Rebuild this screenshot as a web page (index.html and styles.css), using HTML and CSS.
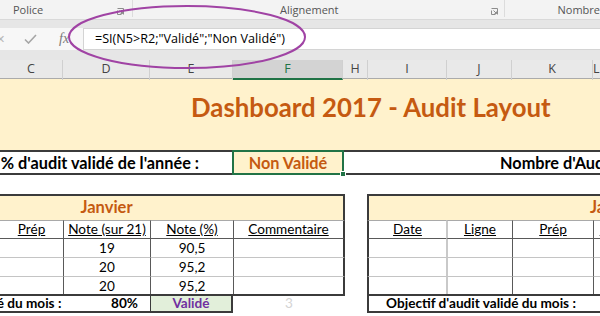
FILE: index.html
```html
<!DOCTYPE html>
<html lang="fr">
<head>
    <meta charset="UTF-8">
    <title>Dashboard 2017 - Audit Layout</title>
    <link rel="stylesheet" href="styles.css">
</head>
<body>
    <div class="ribbon">
        <div class="rgroup g-police">
            <span>Police</span>
            <svg class="launch" width="7" height="7" viewBox="0 0 7 7"><path d="M0.5 2.5V6.5H4.5M0.5 0.5H6.5V6.5M2.5 2.5L5.5 5.5M3.5 5.5H5.5V3.5" fill="none" stroke="#8c8c8c" stroke-width="1"/></svg>
        </div>
        <div class="rgroup g-align">
            <span>Alignement</span>
            <svg class="launch" width="7" height="7" viewBox="0 0 7 7"><path d="M0.5 2.5V6.5H4.5M0.5 0.5H6.5V6.5M2.5 2.5L5.5 5.5M3.5 5.5H5.5V3.5" fill="none" stroke="#8c8c8c" stroke-width="1"/></svg>
        </div>
        <div class="rgroup g-nombre">
            <span>Nombre</span>
        </div>
    </div>

    <div class="fbar">
        <div class="fbtns">
            <span class="cancel">✕</span>
            <svg class="ok" width="13" height="10" viewBox="0 0 13 10"><path d="M1 5.5L4.5 9L12 1" fill="none" stroke="#a6a6a6" stroke-width="1.6"/></svg>
            <span class="fx">fx</span>
        </div>
        <div class="finput">=SI(N5&gt;R2;"Validé";"Non Validé")</div>
    </div>

    <div class="colheads">
        <div class="ch c-c">C</div>
        <div class="ch c-d">D</div>
        <div class="ch c-e">E</div>
        <div class="ch c-f sel">F</div>
        <div class="ch c-h">H</div>
        <div class="ch c-i">I</div>
        <div class="ch c-j">J</div>
        <div class="ch c-k">K</div>
        <div class="ch c-l">L</div>
    </div>

    <div class="sheet">
        <div class="title-row">
            <h1>Dashboard 2017 - Audit Layout</h1>
        </div>

        <div class="kpi-row">
            <div class="kpi-label">Objectif % d'audit validé de l'année :</div>
            <div class="kpi-status">Non Validé<i class="handle"></i></div>
            <div class="kpi-count">Nombre d'Audit validé de l'année :</div>
        </div>

        <div class="tables">
            <div class="tbl tbl-left">
                <div class="month">Janvier</div>

                <div class="hd"></div>
                <div class="hd"><u>Prép</u></div>
                <div class="hd vl"><u>Note (sur 21)</u></div>
                <div class="hd vl"><u>Note (%)</u></div>
                <div class="hd vl last"><u>Commentaire</u></div>

                <div class="td first"></div>
                <div class="td first"></div>
                <div class="td first vl">19</div>
                <div class="td first vl">90,5</div>
                <div class="td first vl last"></div>

                <div class="td"></div>
                <div class="td"></div>
                <div class="td vl">20</div>
                <div class="td vl">95,2</div>
                <div class="td vl last"></div>

                <div class="td"></div>
                <div class="td"></div>
                <div class="td vl">20</div>
                <div class="td vl">95,2</div>
                <div class="td vl last"></div>

                <div class="sum sum-label">Objectif d'audit validé du mois :</div>
                <div class="sum sum-pct">80%</div>
                <div class="sum sum-ok">Validé</div>
                <div class="sum sum-count">3</div>
            </div>

            <div class="tbl tbl-right">
                <div class="month">Janvier</div>

                <div class="hd"><u>Date</u></div>
                <div class="hd soft"><u>Ligne </u></div>
                <div class="hd vl"><u>Prép</u></div>
                <div class="hd vl"><u>Note (sur 21)</u></div>

                <div class="td first"></div>
                <div class="td first soft"></div>
                <div class="td first vl"></div>
                <div class="td first vl"></div>

                <div class="td"></div>
                <div class="td soft"></div>
                <div class="td vl"></div>
                <div class="td vl"></div>

                <div class="td"></div>
                <div class="td soft"></div>
                <div class="td vl"></div>
                <div class="td vl"></div>

                <div class="sum sum-label">Objectif d'audit validé du mois :</div>
                <div class="sum sum-pct"></div>
            </div>
        </div>
    </div>

    <svg class="callout" width="600" height="90" viewBox="0 0 600 90">
        <ellipse cx="187" cy="37" rx="118" ry="31" fill="none" stroke="#a043a4" stroke-width="2"/>
    </svg>
</body>
</html>
```

FILE: styles.css
```css
* {
    box-sizing: border-box;
}

body {
    margin: 0;
    width: 600px;
    height: 316px;
    overflow: hidden;
    position: relative;
    background: #fff;
    font-family: Lato, "Liberation Sans", sans-serif;
    color: #000;
}

/* ribbon */
.ribbon {
    display: flex;
    height: 20px;
    background: #f3f3f3;
    border-bottom: 1px solid #d9d9d9;
    font-family: "Open Sans", sans-serif;
    font-size: 11px;
    color: #555;
}

.rgroup {
    position: relative;
    display: flex;
    align-items: flex-end;
    padding-bottom: 0;
    margin-bottom: 2px;
    border-right: 1px solid #dcdcdc;
}

.launch {
    position: absolute;
    bottom: 2px;
}

.g-police {
    width: 134px;
    padding-left: 13px;
}

.g-police .launch {
    right: 8px;
}

.g-align {
    width: 374px;
    justify-content: center;
    padding-right: 18px;
}

.g-align .launch {
    right: 6px;
}

.g-nombre {
    flex: 1;
    border-right: none;
    padding-left: 53px;
}

/* formula bar */
.fbar {
    display: flex;
    height: 40px;
    padding: 8px 0 10px;
    background: #e6e6e6;
}

.fbtns {
    position: relative;
    width: 83px;
    background: #f7f7f7;
    display: flex;
    align-items: center;
}

.cancel {
    position: absolute;
    left: -4px;
    top: 4px;
    font-size: 11px;
    color: #b8b8b8;
}

.ok {
    margin-left: 24px;
}

.fx {
    margin-left: 22px;
    font-family: "Liberation Serif", serif;
    font-style: italic;
    font-size: 14px;
    color: #7a7a7a;
}

.finput {
    flex: 1;
    background: #fff;
    border: 1px solid #d4d4d4;
    border-right: none;
    padding-left: 11px;
    font-family: "Open Sans", sans-serif;
    font-size: 12.6px;
    line-height: 20px;
    color: #000;
}

/* column headers */
.colheads {
    display: grid;
    grid-template-columns: 63px 87px 83px 110px 25px 79px 65px 81px 1fr;
    height: 19px;
    background: #e9e9e9;
    border-bottom: 1px solid #ababab;
    font-family: "Open Sans", sans-serif;
    font-size: 12.5px;
    color: #444;
}

.ch {
    text-align: center;
    line-height: 18px;
    border-right: 1px solid #d0d0d0;
}

.ch.sel {
    background: #d3d3d3;
    color: #217346;
    border-bottom: 2px solid #217346;
}

/* sheet */
.sheet {
    margin-left: -130px;
    width: 900px;
}

.title-row {
    height: 71px;
    background: #fff2cc;
    padding: 13px 0 0 321px;
}

h1 {
    margin: 0;
    font-size: 25.8px;
    font-weight: 700;
    color: #c55a11;
    line-height: 31px;
    white-space: nowrap;
}

.kpi-row {
    display: flex;
    height: 25px;
    border-top: 2px solid #3b3b3b;
    border-bottom: 2px solid #3b3b3b;
    font-size: 16.3px;
    font-weight: 700;
    line-height: 21px;
}

.kpi-label {
    width: 362px;
    text-align: right;
    padding-right: 33px;
    white-space: nowrap;
}

.kpi-status {
    position: relative;
    width: 112px;
    margin: -2px 0;
    border: 2px solid #217346;
    background: #fff2cc;
    color: #c55a11;
    text-align: center;
}

.handle {
    position: absolute;
    right: -4px;
    bottom: -4px;
    width: 6px;
    height: 6px;
    background: #217346;
    border: 1px solid #fff;
}

.kpi-count {
    flex: 1;
    padding-left: 156px;
    white-space: nowrap;
}

/* month tables */
.tables {
    display: flex;
    gap: 22px;
    margin-top: 19px;
}

.tbl {
    display: grid;
    grid-template-rows: 26px 18px 19px 19px 18px 19px;
    font-size: 13.6px;
    line-height: 17px;
}

.tbl-left {
    grid-template-columns: 130px 63px 87px 83px 112px;
}

.tbl-right {
    grid-template-columns: 79px 66px 81px 90px;
}

.month {
    grid-column: 1 / -1;
    background: #fff2cc;
    border-top: 2px solid #3b3b3b;
    color: #c55a11;
    font-size: 16.5px;
    font-weight: 700;
    line-height: 23px;
    text-align: center;
}

.tbl-left .month {
    border-right: 2px solid #3b3b3b;
}

.tbl-right .month {
    border-left: 2px solid #3b3b3b;
    text-align: left;
    padding-left: 221px;
    white-space: nowrap;
}

.hd,
.td {
    text-align: center;
    white-space: nowrap;
}

.hd {
    border-top: 1px solid #a9a9a9;
}

.td {
    border-top: 1px solid #c4c4c4;
    padding-top: 1px;
}

.td.first {
    border-top-color: #595959;
}

.vl {
    border-left: 1px solid #595959;
}

.last {
    border-right: 2px solid #3b3b3b;
}

.soft {
    border-left: 2px solid #c9c9c9;
}

.tbl-right .hd:nth-child(2),
.tbl-right .td:nth-child(6),
.tbl-right .td:nth-child(10),
.tbl-right .td:nth-child(14),
.tbl-right .sum-label {
    border-left: 2px solid #3b3b3b;
}

.sum {
    border-top: 2px solid #3b3b3b;
    border-bottom: 2px solid #3b3b3b;
    font-weight: 700;
    font-size: 13.6px;
    line-height: 15px;
    white-space: nowrap;
}

.tbl-left .sum-label {
    grid-column: 1 / 3;
    text-align: center;
}

.tbl-right .sum-label {
    grid-column: 1 / 4;
    text-align: center;
}

.sum-pct {
    text-align: right;
    padding-right: 12px;
}

.sum-ok {
    border-left: 1px solid #3b3b3b;
    border-right: 2px solid #3b3b3b;
    background: #e2efda;
    color: #7030a0;
    text-align: center;
}

.sum-count {
    border-bottom: none;
    font-weight: 400;
    color: #d4d4d4;
    text-align: center;
}

/* annotation drawn over the formula bar */
.callout {
    position: absolute;
    left: 0;
    top: 0;
    pointer-events: none;
}
```
